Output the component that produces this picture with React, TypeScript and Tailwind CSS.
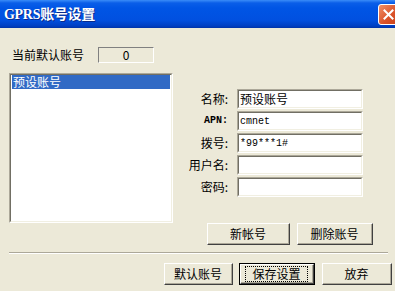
const cjk = "font-['SimSun','Noto_Sans_CJK_SC',sans-serif]"

function Sunken({ className = "", children }: { className?: string; children?: React.ReactNode }) {
  return (
    <div className={`border-t border-l border-t-[#ACA899] border-l-[#ACA899] border-b border-r border-b-white border-r-white ${className}`}>
      <div className="h-full w-full border-t border-l border-t-[#716F64] border-l-[#716F64] border-b border-r border-b-[#F1EFE2] border-r-[#F1EFE2] bg-white">
        {children}
      </div>
    </div>
  )
}

function Btn({ label, width, primary }: { label: string; width: string; primary?: boolean }) {
  return (
    <div className={`${width} h-[22px] ${primary ? "border border-black" : ""}`}>
      <div className="h-full w-full border-t border-l border-t-white border-l-white border-b border-r border-b-[#404040] border-r-[#404040] bg-[#ECE9D8]">
        <div className="h-full w-full border-b border-r border-b-[#ACA899] border-r-[#ACA899] flex items-center justify-center">
          {primary ? (
            <span className="border border-dotted border-black px-[6px] leading-[14px] text-[12px]">{label}</span>
          ) : (
            <span className="text-[12px] leading-[14px]">{label}</span>
          )}
        </div>
      </div>
    </div>
  )
}

export default function App() {
  // latin text in the boxes is narrow, closer to a mono face
  const fields = [
    { label: "名称:", value: "预设账号", monoLabel: false, mono: false },
    { label: "APN:", value: "cmnet", monoLabel: true, mono: true },
    { label: "拨号:", value: "*99***1#", monoLabel: false, mono: true },
    { label: "用户名:", value: "", monoLabel: false, mono: false },
    { label: "密码:", value: "", monoLabel: false, mono: false },
  ]

  return (
    <div className={`w-[395px] h-[291px] overflow-hidden bg-[#ECE9D8] text-black ${cjk}`}>
      <div className="h-[28px] flex items-center justify-between bg-[linear-gradient(to_bottom,#3A8CF8_0px,#0A5EE8_3px,#0055E5_8px,#0150E0_20px,#003FC2_26px,#0033A8_28px)]">
        <span className="ml-[4px] text-white font-bold text-[14px] tracking-[-0.3px] font-['Liberation_Serif','Noto_Sans_CJK_SC',serif] [text-shadow:1px_1px_0_#0A2A8A]">
          GPRS账号设置
        </span>
        <div className="mr-[-4px] w-[21px] h-[21px] rounded-[3px] border border-white bg-[linear-gradient(135deg,#F09068,#DA5128_60%,#C8421A)] flex items-center justify-center">
          <svg width="11" height="11" viewBox="0 0 11 11">
            <path d="M1.5 1.5 L9.5 9.5 M9.5 1.5 L1.5 9.5" stroke="white" strokeWidth="2" strokeLinecap="square" />
          </svg>
        </div>
      </div>

      <div className="pt-[19px] pl-[9px] pr-[7px]">
        <div className="flex items-center h-[16px]">
          <span className="ml-[3px] text-[12px] leading-[14px]">当前默认账号</span>
          <div className="ml-[14px] w-[56px] h-[16px] border-t border-l border-t-[#808080] border-l-[#808080] border-b border-r border-b-white border-r-white flex items-center justify-center text-[12px] leading-[12px]">
            0
          </div>
        </div>

        <div className="mt-[10px] flex items-start h-[170px]">
          <Sunken className="w-[164px] h-[150px] shrink-0">
            <div className="mx-[1px] h-[14px] bg-[#316AC5] text-white text-[12px] leading-[14px] pl-[1px]">预设账号</div>
          </Sunken>

          <div className="ml-[10px] mt-[16px]">
            <div className="flex flex-col gap-[2px]">
              {fields.map((f) => (
                <div key={f.label} className="flex items-center h-[20px]">
                  <span className={`w-[45px] text-right leading-[14px] ${f.monoLabel ? "font-['Liberation_Mono',monospace] text-[10px] font-bold" : "text-[12px]"}`}>
                    {f.label}
                  </span>
                  <Sunken className="ml-[9px] w-[126px] h-[20px]">
                    <div className={`h-full flex items-center pl-[1px] ${f.mono ? "font-['Liberation_Mono',monospace] text-[10px]" : "text-[12px]"}`}>
                      {f.value}
                    </div>
                  </Sunken>
                </div>
              ))}
            </div>
            <div className="mt-[26px] ml-[24px] flex gap-[7px]">
              <Btn label="新帐号" width="w-[83px]" />
              <Btn label="删除账号" width="w-[76px]" />
            </div>
          </div>
        </div>

        <div className="mt-[9px] border-t border-t-[#ACA899] border-b border-b-white" />

        <div className="mt-[9px] mr-[-4px] flex justify-end">
          <Btn label="默认账号" width="w-[69px]" />
          <div className="ml-[6px]">
            <Btn label="保存设置" width="w-[76px]" primary />
          </div>
          <div className="ml-[7px]">
            <Btn label="放弃" width="w-[70px]" />
          </div>
        </div>
      </div>
    </div>
  )
}
